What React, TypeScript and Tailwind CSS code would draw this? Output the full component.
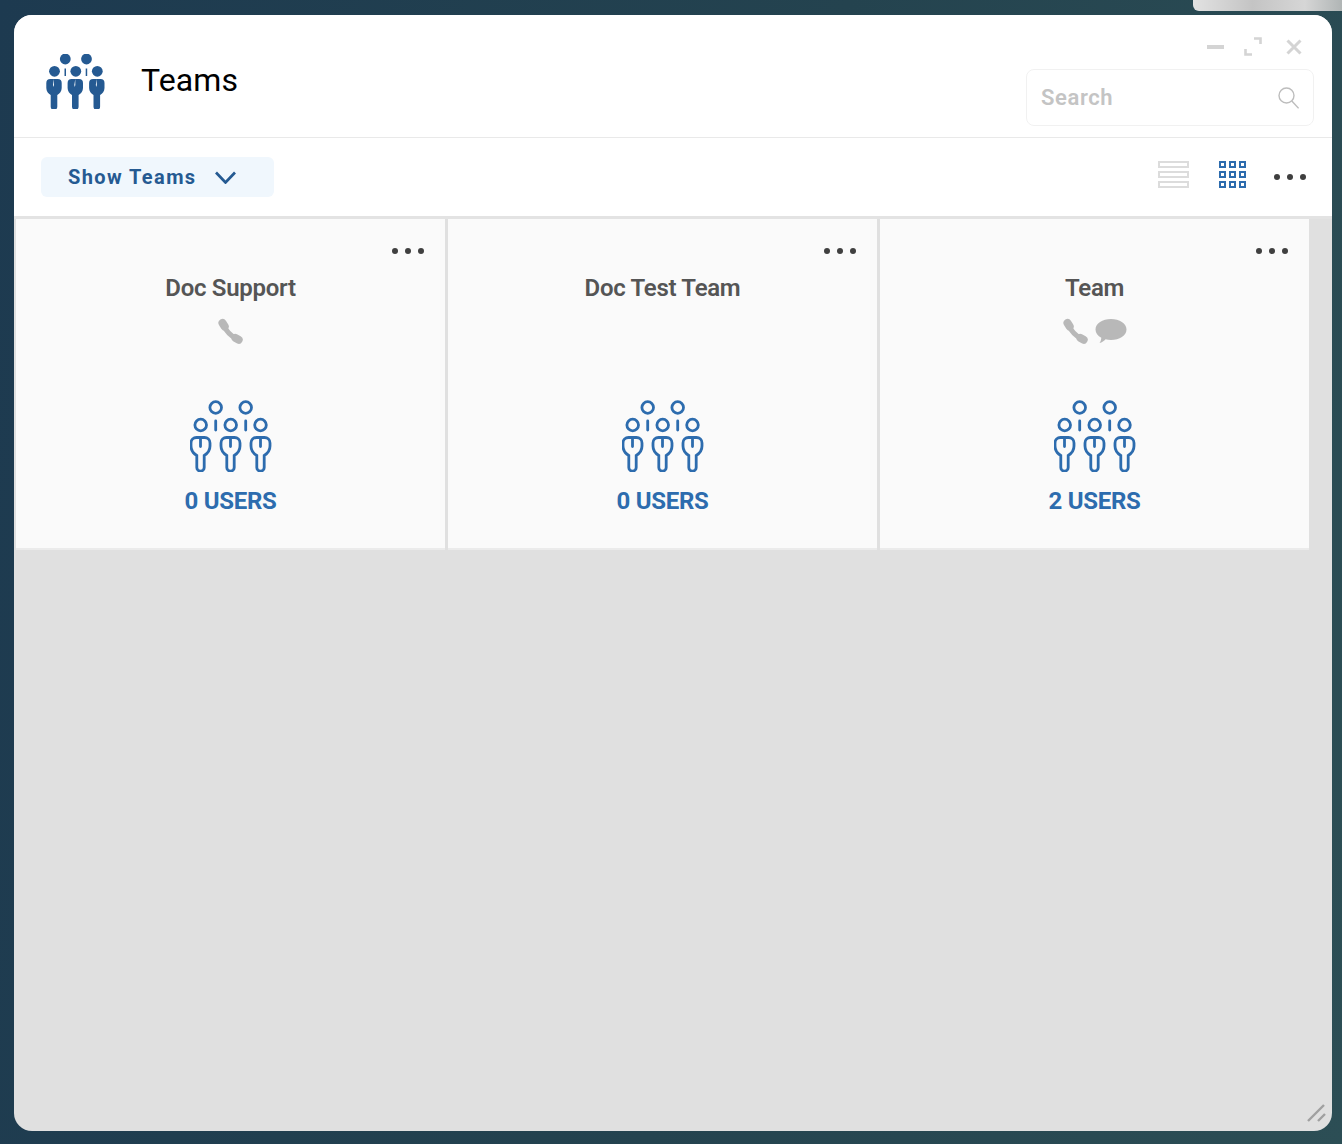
const teams = [
  { name: 'Doc Support', users: 0, phone: true, chat: false },
  { name: 'Doc Test Team', users: 0, phone: false, chat: false },
  { name: 'Team', users: 2, phone: true, chat: true },
];

const Dots = () => (
  <div className="flex items-center gap-[7px]">
    <span className="w-[6px] h-[6px] rounded-full bg-[#3f3f3f]" />
    <span className="w-[6px] h-[6px] rounded-full bg-[#3f3f3f]" />
    <span className="w-[6px] h-[6px] rounded-full bg-[#3f3f3f]" />
  </div>
);

const bodyOutline = (cx: number) =>
  `M${cx} 37.500h-4a5.500 5.500 0 0 0-5.500 5.500v3c0 4.500 2.500 7.500 5.800 9.500v12a3.700 3.700 0 0 0 7.400 0v-12c3.300-2 5.800-5 5.800-9.500v-3a5.500 5.500 0 0 0-5.500-5.500h-4M${cx} 37.500v9`;

const TeamOutlineIcon = () => (
  <svg width="82" height="72" viewBox="0 0 82 72" fill="none" stroke="#2d6cae" strokeWidth="2.800" strokeLinecap="round">
    <circle cx="25.700" cy="7.500" r="5.800" />
    <circle cx="55.700" cy="7.500" r="5.800" />
    <circle cx="10.700" cy="25" r="5.800" />
    <circle cx="40.700" cy="25" r="5.800" />
    <circle cx="70.500" cy="25" r="5.800" />
    <path d="M25.700 21v9M55.700 21v9" />
    <path d={bodyOutline(10.5)} />
    <path d={bodyOutline(40.5)} />
    <path d={bodyOutline(70.5)} />
  </svg>
);

const bodySolid = (cx: number) =>
  `M${cx - 0.5} 25h-3.700a4 4 0 0 0-4 4v5c0 3.500 2 5.500 4.400 7v11.500a3.300 3.300 0 0 0 6.600 0v-11.500c2.400-1.500 4.400-3.500 4.400-7v-5a4 4 0 0 0-4-4h-3.700v6l-.5 2-.5-2z`;

const TeamSolidIcon = () => (
  <svg width="60" height="55" viewBox="0 0 60 55" fill="#255a92">
    <circle cx="19.300" cy="5" r="5.400" />
    <circle cx="40.500" cy="5" r="5.400" />
    <circle cx="8.500" cy="17.300" r="5.400" />
    <circle cx="29.800" cy="17.300" r="5.400" />
    <circle cx="51.300" cy="17.300" r="5.400" />
    <rect x="18.500" y="14.500" width="1.500" height="7.500" />
    <rect x="39.700" y="14.500" width="1.500" height="7.500" />
    <path d={bodySolid(8.5)} />
    <path d={bodySolid(29.8)} />
    <path d={bodySolid(51.3)} />
  </svg>
);

const PhoneIcon = () => (
  <svg width="27" height="27" viewBox="0 0 27 27" fill="none" stroke="#b8b8b8" strokeLinecap="round">
    <path d="M5.500 5l2.200 3.500" strokeWidth="8" />
    <path d="M7 8c2.500 5.500 6.500 9.500 12 12.500" strokeWidth="5" />
    <path d="M18.500 20l3.200 1.800" strokeWidth="8" />
  </svg>
);

const ChatIcon = () => (
  <svg width="32" height="27" viewBox="0 0 32 27" fill="#b8b8b8">
    <path d="M16 1c8.500 0 15.500 4.500 15.500 10.500S24.500 22 16 22c-2 0-3.800-.2-5.400-.7-1.600 1.800-3.600 3.200-6.100 3.700 1-1.500 1.700-3 1.800-5.300C2.800 18 .5 15 .5 11.500.5 5.500 7.500 1 16 1z" />
  </svg>
);

const ChevronIcon = () => (
  <svg width="21" height="13" viewBox="0 0 21 13" fill="none" stroke="#255a92" strokeWidth="2.700">
    <path d="M1 1.500l9.500 10 9.500-10" />
  </svg>
);

const SearchIcon = () => (
  <svg width="21" height="22" viewBox="0 0 21 22" fill="none" stroke="#bdbdbd" strokeWidth="1.400">
    <circle cx="8.500" cy="8.500" r="7.500" />
    <path d="M13.800 14l6.800 7.400" />
  </svg>
);

const ListIcon = () => (
  <div className="flex flex-col gap-[3px]">
    <span className="w-[31px] h-[7px] border-2 border-[#dcdcdc]" />
    <span className="w-[31px] h-[7px] border-2 border-[#dcdcdc]" />
    <span className="w-[31px] h-[7px] border-2 border-[#dcdcdc]" />
  </div>
);

const GridIcon = () => (
  <div className="grid grid-cols-3 gap-[3px]">
    {Array.from({ length: 9 }).map((_, i) => (
      <span key={i} className="w-[7px] h-[7px] border-2 border-[#2d6cae]" />
    ))}
  </div>
);

const ExpandIcon = () => (
  <svg width="18" height="19" viewBox="0 0 18 19" fill="none" stroke="#d4d4d4" strokeWidth="2.600">
    <path d="M10 1.500h6.500V7M1.500 12v5.500H8" />
  </svg>
);

const CloseIcon = () => (
  <svg width="16" height="16" viewBox="0 0 16 16" stroke="#d4d4d4" strokeWidth="3">
    <path d="M1.500 1.500l13 13M14.500 1.500l-13 13" />
  </svg>
);

const TeamCard = ({ team }: { team: (typeof teams)[number] }) => (
  <div className="relative h-[331px] bg-[#fafafa] border-b-2 border-[#ebebeb] flex flex-col items-center">
    <div className="absolute top-[29px] right-[21px]">
      <Dots />
    </div>
    <h3 className="mt-[53px] h-[32px] leading-[32px] text-[24px] font-semibold tracking-[-0.3px] text-[#555555]">{team.name}</h3>
    <div className="mt-[14px] h-[27px] flex items-center gap-[6px]">
      {team.phone && <PhoneIcon />}
      {team.chat && <ChatIcon />}
    </div>
    <div className="mt-[55px]">
      <TeamOutlineIcon />
    </div>
    <div className="mt-[12px] leading-[34px] text-[24px] font-bold tracking-[-0.3px] text-[#2d6cae]">{team.users} USERS</div>
  </div>
);

export default function App() {
  return (
    <div className="relative h-[1144px] overflow-hidden pt-[15px] pl-[14px] pr-[10px] font-['Roboto',sans-serif] bg-[linear-gradient(100deg,#1d3a50_0%,#24434f_55%,#2c4e55_100%)]">
      <div className="absolute top-0 right-0 w-[149px] h-[11px] rounded-bl-[6px] bg-[linear-gradient(90deg,#e2e2e2,#c4c4c4_40%,#d6d6d6_75%,#b0b5b5)]" />

      <div className="relative h-[1116px] rounded-[18px] overflow-hidden bg-[#e0e0e0] flex flex-col">
        <header className="h-[123px] shrink-0 bg-white border-b border-[#e9e9e9] flex justify-between pl-[32px] pr-[18px]">
          <div className="flex items-start pt-[39px]">
            <TeamSolidIcon />
            <h1 className="ml-[35px] mt-[6px] leading-[40px] text-[32px] tracking-[0.1px] text-black">Teams</h1>
          </div>
          <div className="flex flex-col items-end">
            <div className="h-[54px] pt-[9px] flex items-center">
              <span className="w-[17px] h-[4px] bg-[#d4d4d4]" />
              <span className="ml-[20px]">
                <ExpandIcon />
              </span>
              <span className="ml-[24px] mr-[12px]">
                <CloseIcon />
              </span>
            </div>
            <div className="w-[288px] h-[57px] rounded-[8px] border border-[#f1f1f1] flex items-center justify-between pl-[14px] pr-[14px]">
              <span className="text-[22px] font-semibold tracking-[0.6px] text-[#c4c4c4]">Search</span>
              <SearchIcon />
            </div>
          </div>
        </header>

        <div className="h-[78px] shrink-0 bg-white flex items-center justify-between pl-[27px] pr-[26px]">
          <button className="w-[233px] h-[40px] rounded-[6px] bg-[#f0f7fd] flex items-center pl-[27px] text-[20px] font-bold tracking-[1.400px] text-[#255a92]">
            Show Teams
            <span className="ml-[18px]">
              <ChevronIcon />
            </span>
          </button>
          <div className="flex items-center">
            <span className="mb-[5px]">
              <ListIcon />
            </span>
            <span className="ml-[30px] mb-[5px]">
              <GridIcon />
            </span>
            <span className="ml-[28px]">
              <Dots />
            </span>
          </div>
        </div>

        <div className="flex-1 border-t-[3px] border-[#e3e3e3] pl-[2px]">
          <div className="grid grid-cols-[429px_429px_429px] gap-[3px]">
            {teams.map((t) => (
              <TeamCard key={t.name} team={t} />
            ))}
          </div>
        </div>

        <svg className="absolute right-[6px] bottom-[8px]" width="20" height="20" viewBox="0 0 20 20" stroke="#a0a0a0" strokeWidth="2.400">
          <path d="M2 18L18 2M12 18l7-7" />
        </svg>
      </div>
    </div>
  );
}
